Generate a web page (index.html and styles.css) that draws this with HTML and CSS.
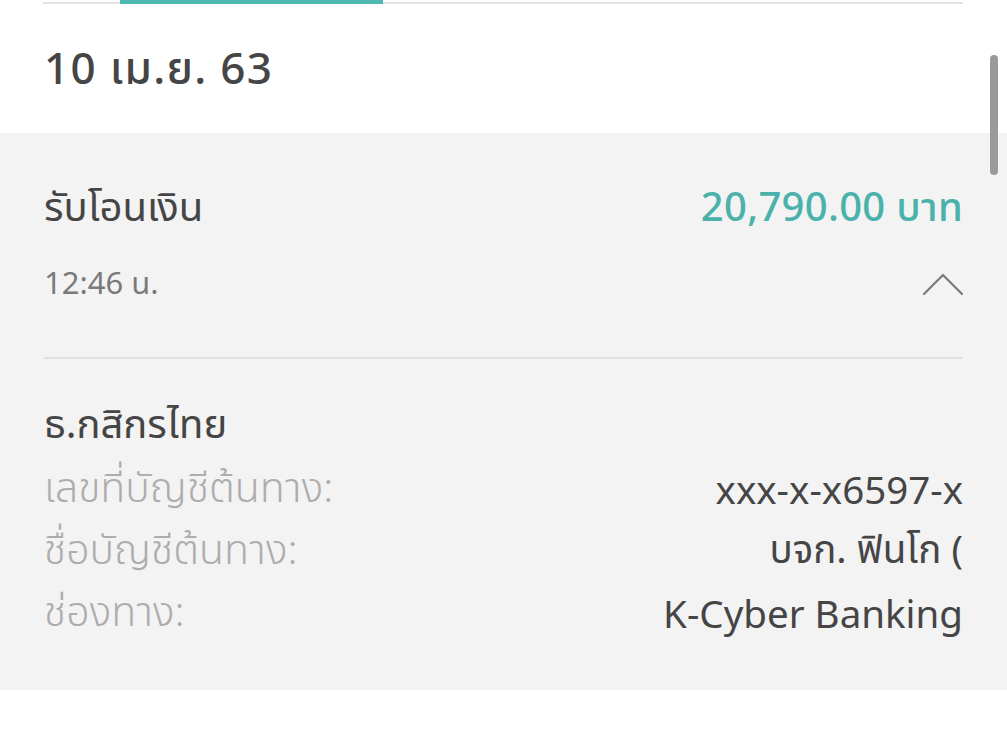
FILE: index.html
```html
<!DOCTYPE html>
<html lang="th">
<head>
<meta charset="utf-8">
<title>รายการ</title>
<link rel="stylesheet" href="styles.css">
</head>
<body>
<div class="screen">
  <div class="tabbar"><div class="tab-indicator"></div></div>
  <div class="date-header">10 เม.ย. 63</div>
  <section class="panel">
    <div class="summary-row">
      <span class="title">รับโอนเงิน</span>
      <span class="amount">20,790.00 บาท</span>
    </div>
    <div class="time-row">
      <span class="time">12:46 น.</span>
      <svg class="chevron" width="42" height="26" viewBox="0 0 42 26"><path d="M2 23 L21 4 L40 23" fill="none" stroke="#7a7a7a" stroke-width="2.2" stroke-linecap="round" stroke-linejoin="round"/></svg>
    </div>
    <div class="divider"></div>
    <div class="bank">ธ.กสิกรไทย</div>
    <div class="detail-row"><span class="label">เลขที่บัญชีต้นทาง:</span><span class="value">xxx-x-x6597-x</span></div>
    <div class="detail-row"><span class="label">ชื่อบัญชีต้นทาง:</span><span class="value">บจก. ฟินโก (</span></div>
    <div class="detail-row"><span class="label">ช่องทาง:</span><span class="value">K-Cyber Banking</span></div>
  </section>
  <div class="scrollbar"></div>
</div>
</body>
</html>
```
FILE: styles.css
```css
* { box-sizing: border-box; }
html, body { margin: 0; padding: 0; background: #ffffff; }
body {
  font-family: "Noto Sans", "Noto Sans Thai", "DejaVu Sans", sans-serif;
  color: #454545;
  width: 1007px;
  height: 730px;
  overflow: hidden;
}
.screen { position: relative; height: 730px; }
.tabbar {
  display: flex;
  align-items: flex-start;
  margin-left: 43px;
  width: 920px;
  height: 4px;
  border-bottom: 2px solid #e2e2e2;
}
.tab-indicator {
  margin-left: 77px;
  width: 263px;
  height: 4px;
  background: #4fb8b2;
}
.date-header {
  height: 129px;
  display: flex;
  align-items: center;
  padding-left: 44px;
  padding-top: 3px;
  font-size: 44px;
  letter-spacing: 1.3px;
  font-weight: 500;
  color: #454545;
}
.panel {
  background: #f3f3f3;
  padding: 50px 44px 45px 44px;
  height: 557px;
}
.summary-row {
  display: flex;
  justify-content: space-between;
  align-items: center;
  height: 50px;
}
.title { font-size: 40px; color: #454545; }
.amount { font-size: 40px; color: #4ab2ab; font-weight: 500; letter-spacing: 0.3px; }
.time-row {
  display: flex;
  justify-content: space-between;
  align-items: center;
  height: 40px;
  margin-top: 31px;
}
.time { font-size: 31px; color: #7a7a7a; }
.chevron { display: block; margin-right: -1px; }
.divider {
  height: 2px;
  background: #e0e0e0;
  margin-top: 53px;
}
.bank {
  margin-top: 39px;
  height: 50px;
  line-height: 50px;
  font-size: 40px;
  color: #454545;
}
.detail-row {
  display: flex;
  justify-content: space-between;
  align-items: center;
  height: 62px;
}
.bank + .detail-row { margin-top: 10px; }
.label { font-size: 41px; color: #adadad; font-weight: 300; }
.value { font-size: 38.5px; color: #454545; }
.scrollbar {
  position: absolute;
  top: 55px;
  right: 9px;
  width: 8px;
  height: 120px;
  border-radius: 4px;
  background: #9a9a9a;
}
```
